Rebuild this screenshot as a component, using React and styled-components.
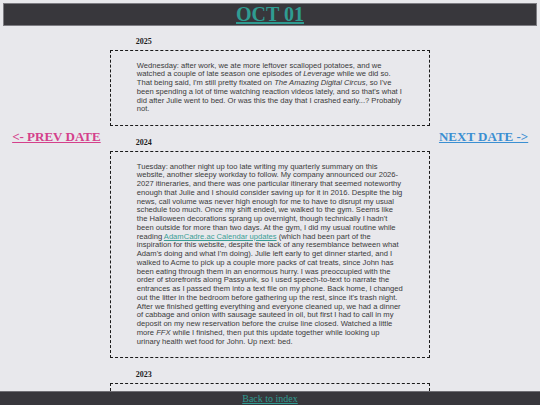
import React from 'react'
import styled, { createGlobalStyle } from 'styled-components'

const GlobalStyle = createGlobalStyle`
    html, body {
        margin: 0;
        padding: 0;
        background: #e8e8ec;
    }
    body {
        padding: 3px 3px 20px;
        font-family: "Liberation Serif", "Times New Roman", serif;
    }
`

const Header = styled.header`
    background: #38373c;
    border: 1px solid #7d7c82;
    height: 21px;
    display: flex;
    align-items: center;
    justify-content: center;
`

const Title = styled.a`
    font-family: "Liberation Serif", serif;
    font-weight: bold;
    font-size: 20px;
    line-height: 21px;
    color: #2f9c92;
    text-decoration: underline;
`

const Layout = styled.div`
    display: grid;
    grid-template-columns: 1fr 3fr 1fr;
`

const Side = styled.div`
    padding-top: 101px;
    text-align: center;
`

const NavLink = styled.a`
    font-family: "Liberation Serif", serif;
    font-weight: bold;
    font-size: 13px;
    line-height: 15px;
    color: ${props => props.color};
    text-decoration: underline;
    white-space: nowrap;
`

const Entries = styled.main`
    padding-top: 11px;
    display: flex;
    flex-direction: column;
    gap: 12px;
`

const Year = styled.h4`
    margin: 0 0 4px;
    padding-left: 26px;
    font-family: "Liberation Serif", serif;
    font-weight: bold;
    font-size: 8px;
    line-height: 9px;
    color: #1c1c1c;
`

const Entry = styled.div`
    border: 1px dashed #1a1a1a;
    padding: 10.7px 24.5px 10.7px 26px;
    min-height: ${props => props.minHeight || 0}px;
    font-family: "Liberation Sans", Arial, sans-serif;
    font-size: 7.6px;
    line-height: 8.75px;
    color: #3a3a3a;
`

const TextLink = styled.a`
    color: #3a9e96;
    text-decoration: underline;
`

const Footer = styled.footer`
    position: fixed;
    left: 0;
    right: 0;
    bottom: 0;
    height: 13px;
    background: #38373c;
    border-top: 1px solid #6f6e74;
    display: flex;
    align-items: center;
    justify-content: center;
`

const FooterLink = styled.a`
    font-family: "Liberation Serif", serif;
    font-size: 10px;
    line-height: 12px;
    color: #2f9c92;
    text-decoration: underline;
`

const App = () => {
    return (
        <>
            <GlobalStyle />
            <Header>
                <Title>OCT 01</Title>
            </Header>
            <Layout>
                <Side>
                    <NavLink color="#d4408b">&lt;- PREV DATE</NavLink>
                </Side>

                <Entries>
                    <section>
                        <Year>2025</Year>
                        <Entry>
                            Wednesday: after work, we ate more leftover scalloped potatoes, and we
                            watched a couple of late season one episodes of <i>Leverage</i> while we did so.
                            That being said, I'm still pretty fixated on <i>The Amazing Digital Circus</i>, so I've
                            been spending a lot of time watching reaction videos lately, and so that's what I
                            did after Julie went to bed. Or was this the day that I crashed early...? Probably
                            not.
                        </Entry>
                    </section>

                    <section>
                        <Year>2024</Year>
                        <Entry>
                            Tuesday: another night up too late writing my quarterly summary on this
                            website, another sleepy workday to follow. My company announced our 2026-2027
                            itineraries, and there was one particular itinerary that seemed noteworthy
                            enough that Julie and I should consider saving up for it in 2016. Despite the big
                            news, call volume was never high enough for me to have to disrupt my usual
                            schedule too much. Once my shift ended, we walked to the gym. Seems like
                            the Halloween decorations sprang up overnight, though technically I hadn't
                            been outside for more than two days. At the gym, I did my usual routine while
                            reading <TextLink>AdamCadre.ac Calendar updates</TextLink> (which had been part of the
                            inspiration for this website, despite the lack of any resemblance between what
                            Adam's doing and what I'm doing). Julie left early to get dinner started, and I
                            walked to Acme to pick up a couple more packs of cat treats, since John has
                            been eating through them in an enormous hurry. I was preoccupied with the
                            order of storefronts along Passyunk, so I used speech-to-text to narrate the
                            entrances as I passed them into a text file on my phone. Back home, I changed
                            out the litter in the bedroom before gathering up the rest, since it's trash night.
                            After we finished getting everything and everyone cleaned up, we had a dinner
                            of cabbage and onion with sausage sauteed in oil, but first I had to call in my
                            deposit on my new reservation before the cruise line closed. Watched a little
                            more <i>FFX</i> while I finished, then put this update together while looking up
                            urinary health wet food for John. Up next: bed.
                        </Entry>
                    </section>

                    <section>
                        <Year>2023</Year>
                        <Entry minHeight={60} />
                    </section>
                </Entries>

                <Side>
                    <NavLink color="#3b8fd2">NEXT DATE -&gt;</NavLink>
                </Side>
            </Layout>
            <Footer>
                <FooterLink>Back to index</FooterLink>
            </Footer>
        </>
    )
}

export default App
